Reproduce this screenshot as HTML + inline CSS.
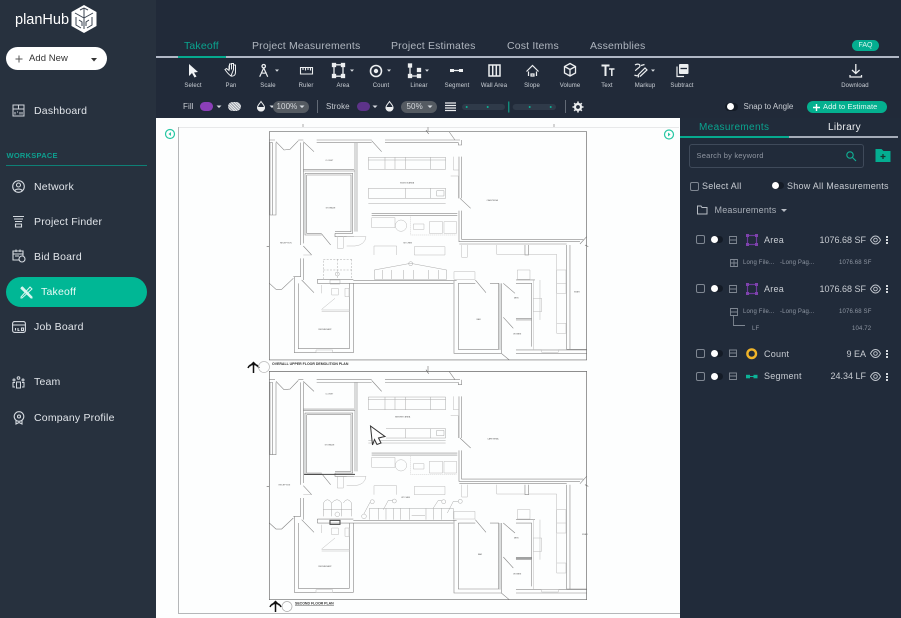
<!DOCTYPE html>
<html lang="en"><head><meta charset="utf-8"><title>planHub Takeoff</title>
<style>
html,body{margin:0;padding:0}
body{width:901px;height:618px;overflow:hidden;background:#27313e;position:relative;font-family:"Liberation Sans",sans-serif;color:#dfe3e8}
.t{position:absolute;white-space:nowrap;line-height:12px;height:12px}
.a{position:absolute}
.nav{font-size:10.5px;left:34px;letter-spacing:.2px;color:#e1e5ea}
.tab{font-size:10.5px;top:39.5px;letter-spacing:.17px;color:#b0b6bf}
.lbl{font-size:6px;top:79.500px;width:50px;text-align:center;color:#ccd1d7;letter-spacing:.1px}
.r2{font-size:8px;top:100.500px;color:#c8ccd2;letter-spacing:.1px}
.m{font-size:9px;color:#c8ccd2;letter-spacing:.25px}
.v{font-size:9px;color:#c8ccd2;text-align:right;right:35px}
.s{font-size:6px;color:#8e96a2;letter-spacing:.15px}
.cb{position:absolute;width:7px;height:7px;border:1px solid #7f8792;border-radius:2px;left:696px}
.tg{position:absolute;width:12px;height:7px;border-radius:4px;background:#141b26;left:711px}
.tg:before{content:"";position:absolute;left:0;top:0;width:7px;height:7px;border-radius:50%;background:#fff}
svg{position:absolute;overflow:visible}
</style></head><body>

<!-- main areas -->
<div class="a" style="left:156px;top:0;width:745px;height:118px;background:#212a39"></div>
<div class="a" style="left:679px;top:118px;width:222px;height:500px;background:#212b3a"></div>
<div class="a" style="left:156px;top:118px;width:523.500px;height:500px;background:#fdfefe"></div>

<!-- logo -->
<div class="t" style="left:15px;top:12.500px;font-size:14.500px;line-height:14px;height:14px;color:#fff">planHub</div>
<svg style="left:70px;top:4px" width="28" height="30" viewBox="0 0 28 30"><path d="M14 1L26.500 8V22L14 29L1.500 22V8Z" fill="#fff"/><path d="M14 4V14M14 14L5 9M14 14L23 9M14 14V25M6 13V21L11 24M22 13V21L17 24M10 6L14 4L18 6M9 16L12 18V22M19 16L16 18V22" fill="none" stroke="#3a4350" stroke-width="1"/></svg>

<!-- add new -->
<div class="a" style="left:6px;top:47px;width:101px;height:23px;border-radius:12px;background:#fff"></div>
<svg style="left:15px;top:55px" width="8" height="8"><path d="M4 .5V7.500M.5 4H7.500" stroke="#555" stroke-width="1"/></svg>
<div class="t" style="left:29px;top:53px;font-size:9.500px;color:#333;letter-spacing:.05px">Add New</div>
<svg style="left:90.500px;top:57.500px" width="6" height="4"><path d="M0 0H6L3 3.500Z" fill="#333"/></svg>

<!-- nav -->
<svg style="left:12px;top:104px" width="13" height="13" viewBox="0 0 13 13" fill="none" stroke="#cfd4da"><path d="M1 1H12V12H1ZM1 5H12M6.500 1V5M3 8V10.500M8 8V10.500M5 8H6M10 8V10.500"/></svg>
<div class="t nav" style="top:105px">Dashboard</div>
<div class="t" style="left:6.500px;top:150px;font-size:7.500px;font-weight:bold;color:#0e9f8f;letter-spacing:.25px">WORKSPACE</div>
<div class="a" style="left:6px;top:165px;width:141px;height:1px;background:#0e8076"></div>

<svg style="left:12px;top:180px" width="13" height="13" viewBox="0 0 13 13" fill="none" stroke="#d5dae0" stroke-width="1.100"><circle cx="6.500" cy="6.500" r="5.800"/><circle cx="6.500" cy="5" r="2"/><path d="M2.800 10.600C4 8.600 9 8.600 10.200 10.600"/></svg>
<div class="t nav" style="top:180.500px">Network</div>
<svg style="left:12px;top:215px" width="13" height="13" viewBox="0 0 13 13" fill="none" stroke="#d5dae0" stroke-width="1.100"><path d="M1 1.500H12M2 4H11M3 6.500H10M3.500 9H9.500V12H3.500Z"/></svg>
<div class="t nav" style="top:215.700px">Project Finder</div>
<svg style="left:12px;top:249px" width="14" height="14" viewBox="0 0 14 14" fill="none" stroke="#d5dae0" stroke-width="1.100"><path d="M7 11H1V2H11V7M1 5H11M4 .5V3M8 .5V3M3 7H7"/><circle cx="10" cy="10" r="3"/></svg>
<div class="t nav" style="top:250.700px">Bid Board</div>

<div class="a" style="left:6px;top:277px;width:141px;height:30px;border-radius:15px;background:#00b795"></div>
<svg style="left:20px;top:286px" width="13" height="13" viewBox="0 0 13 13" fill="none" stroke="#d6f5ee" stroke-width="1"><path d="M1 1L12 12M2.500 1L1 2.500L11 12H12V11ZM10 1L1 11V12H2L12 3Z"/></svg>
<div class="t nav" style="top:285.700px;left:41px;color:#eafbf7">Takeoff</div>

<svg style="left:12px;top:321px" width="14" height="12" viewBox="0 0 14 12" fill="none" stroke="#d5dae0" stroke-width="1.100"><rect x=".6" y=".6" width="12.800" height="10.800" rx="2"/><path d="M1 4H13M3.500 7V9.500M6 7V9.500H7.500M9.500 7H11.500V9.500H9.500Z"/></svg>
<div class="t nav" style="top:321.300px">Job Board</div>
<svg style="left:12px;top:376px" width="13" height="13" viewBox="0 0 13 13" fill="none" stroke="#d5dae0"><circle cx="6.500" cy="2" r="1.300"/><circle cx="2" cy="4" r="1"/><circle cx="11" cy="4" r="1"/><path d="M4.500 6H8.500V12H4.500ZM3 6.500H1V11H3M10 6.500H12V11H10"/></svg>
<div class="t nav" style="top:376.300px">Team</div>
<svg style="left:13px;top:411px" width="12" height="14" viewBox="0 0 12 14" fill="none" stroke="#d5dae0" stroke-width="1.100"><circle cx="6" cy="5.500" r="4.800"/><circle cx="6" cy="5.500" r="1.500"/><path d="M3 9.500V13L6 11.500L9 13V9.500"/></svg>
<div class="t nav" style="top:411.700px">Company Profile</div>

<!-- tabs -->
<div class="t tab" style="left:184px;color:#0aa48f">Takeoff</div>
<div class="t tab" style="left:252px">Project Measurements</div>
<div class="t tab" style="left:391px">Project Estimates</div>
<div class="t tab" style="left:507px">Cost Items</div>
<div class="t tab" style="left:590px">Assemblies</div>
<div class="a" style="left:852px;top:40px;width:27px;height:11px;border-radius:6px;background:#05ad90"></div>
<div class="t" style="left:852px;top:39.500px;width:27px;text-align:center;font-size:7px;color:#d8f5ee">FAQ</div>
<div class="a" style="left:156px;top:55.500px;width:743px;height:2px;background:#b0b7c5"></div>
<div class="a" style="left:178px;top:55.500px;width:48px;height:2px;background:#06a98e"></div>

<!-- tools -->
<svg style="left:156px;top:60px" width="745" height="22" fill="none" stroke="#eceef0" stroke-width="1.300">
<path d="M33 4V16L36 13L38.500 17.500L40.500 16.500L38 12.500L42 12Z" fill="#f2f4f6" stroke="none"/>
<path d="M75 16C72 14 70 11 69 9.500L70.500 8.500L73 10.500V5.500M73.500 9.500V4H75.500V9.500M75.500 9V3.500H77.500V9.500M77.500 9.500V5H79.500V12C79.500 15 78 16.500 75 16Z" stroke-width="1"/>
<path d="M107.700 8L103.700 16.700M107.700 8L111.700 16.700M105 12.500C107 13.500 108.500 13.500 110.500 12.500" stroke-width="1.200"/><circle cx="107.700" cy="6.200" r="1.700"/>
<path d="M144.500 7.500H156.500V14H144.500ZM147 7.500V10M149.500 7.500V10.500M152 7.500V10M154.500 7.500V10.500" stroke-width="1.100"/>
<path d="M178 6V15M187 6V15M180 4.800H185M180 16.200H185"/><rect x="176.500" y="3.500" width="3" height="3" fill="#eceef0"/><rect x="185.500" y="3.500" width="3" height="3" fill="#eceef0"/><rect x="176.500" y="14.500" width="3" height="3" fill="#eceef0"/><rect x="185.500" y="14.500" width="3" height="3" fill="#eceef0"/>
<circle cx="220" cy="11" r="5.500" stroke-width="1.600"/><circle cx="220" cy="11" r="2.200" fill="#eceef0" stroke="none"/>
<path d="M254 6V16H261"/><rect x="252.500" y="4" width="3" height="3" fill="#eceef0"/><rect x="252.500" y="14.500" width="3" height="3" fill="#eceef0"/><rect x="261.500" y="14.500" width="3" height="3" fill="#eceef0"/><rect x="261.500" y="8.500" width="3" height="3" fill="#eceef0"/>
<path d="M296 10.500H304"/><rect x="294" y="9" width="4" height="3" fill="#eceef0" stroke="none"/><rect x="303" y="9" width="4" height="3" fill="#eceef0" stroke="none"/>
<path d="M333 5H344V16H333ZM336.700 5V16M340.300 5V16" stroke-width="1.500"/>
<path d="M370.500 11.500L376.500 5.500L382.500 11.500M372.500 11.500V16M380.500 11.500V16M375 14H378V16H375Z" stroke-width="1.200"/>
<path d="M414 3.500L419.500 6.500V13L414 16L408.500 13V6.500ZM408.500 6.500L414 9.500L419.500 6.500M414 9.500V16"/>
<path d="M445.500 5.500H453.500M449.500 5.500V16" stroke-width="2"/><path d="M453 9H458.500M455.800 9V16" stroke-width="1.500"/>
<path d="M479 5C481 3.500 484 4 484 6C484 8 479.500 9 479.500 11M485 5.500L488.500 4.500M482 15L489 8L491 10L484 16.500M478.500 15C481 17 484 14 482 17.500" stroke-width="1.200"/>
<path d="M521 6.500V16.500H528" stroke-width="1.200"/><rect x="523" y="4" width="9.500" height="10" rx="1" fill="#eceef0" stroke="none"/><path d="M524.500 8.500H531" stroke="#212a39"/>
<path d="M699.800 4V13M696 10L699.800 13.500L703.600 10M694 15V17H705.500V15" stroke-width="1.300"/>
</svg>
<svg style="left:156px;top:60px" width="745" height="22" fill="#d8dce1">
<path d="M119 9.500h4l-2 2.200zM194 9.500h4l-2 2.200zM231 9.500h4l-2 2.200zM269 9.500h4l-2 2.200zM495 9.500h4l-2 2.200z"/>
</svg>
<div class="t lbl" style="left:168px">Select</div>
<div class="t lbl" style="left:206px">Pan</div>
<div class="t lbl" style="left:243px">Scale</div>
<div class="t lbl" style="left:281px">Ruler</div>
<div class="t lbl" style="left:318px">Area</div>
<div class="t lbl" style="left:356px">Count</div>
<div class="t lbl" style="left:394px">Linear</div>
<div class="t lbl" style="left:432px">Segment</div>
<div class="t lbl" style="left:469px">Wall Area</div>
<div class="t lbl" style="left:507px">Slope</div>
<div class="t lbl" style="left:545px">Volume</div>
<div class="t lbl" style="left:582px">Text</div>
<div class="t lbl" style="left:620px">Markup</div>
<div class="t lbl" style="left:657px">Subtract</div>
<div class="t lbl" style="left:830px">Download</div>

<!-- row 2 -->
<div class="t r2" style="left:183px">Fill</div>
<div class="a" style="left:200px;top:102px;width:13px;height:9px;border-radius:5px;background:#8b3fb8"></div>
<div class="a" style="left:228px;top:102px;width:13px;height:9px;border-radius:5px;background:repeating-linear-gradient(45deg,#e6e8eb 0 1px,#9aa0a8 1px 2px)"></div>
<svg style="left:156px;top:98px" width="745" height="18"><path d="M113.500 7.500h5l-2.500 2.500z" fill="#d8dce1"/></svg>
<div class="a" style="left:272.700px;top:100.700px;width:36px;height:12px;border-radius:6px;background:#555b62"></div>
<div class="t r2" style="left:276.500px;color:#d5d8dc">100%</div>
<div class="a" style="left:317px;top:100px;width:1px;height:13px;background:#626a76"></div>
<div class="t r2" style="left:326px">Stroke</div>
<div class="a" style="left:357px;top:102px;width:13px;height:9px;border-radius:5px;background:#5d3389"></div>
<div class="a" style="left:401px;top:100.700px;width:36px;height:12px;border-radius:6px;background:#555b62"></div>
<div class="t r2" style="left:406.500px;color:#d5d8dc">50%</div>
<div class="a" style="left:565px;top:100px;width:1px;height:13px;background:#626a76"></div>
<svg style="left:156px;top:98px" width="745" height="18" fill="none" stroke="#eceef0">
<path d="M60.500 7.500h5l-2.500 2.500zM216.500 7.500h5l-2.500 2.500zM143.500 7.500h5l-2.500 2.500zM271.500 7.500h5l-2.500 2.500z" fill="#d8dce1" stroke="none"/>
<path d="M105 3.500C103 6.500 101.500 7.500 101.500 9.500A3.500 3.500 0 0 0 108.500 9.500C108.500 7.500 107 6.500 105 3.500Z"/><path d="M101.500 9.500H108.500A3.500 3.500 0 0 1 101.500 9.500Z" fill="#eceef0"/>
<path d="M233.500 3.500C231.500 6.500 230 7.500 230 9.500A3.500 3.500 0 0 0 237 9.500C237 7.500 235.500 6.500 233.500 3.500Z"/><path d="M230 9.500H237A3.500 3.500 0 0 1 230 9.500Z" fill="#eceef0"/>
<path d="M289 5H300M289 7.500H300M289 10H300M289 12.500H300" stroke-width="1.200"/>
<rect x="306" y="6" width="43" height="6" rx="3" fill="#2f3a49" stroke="none"/><rect x="356.700" y="6" width="43.300" height="6" rx="3" fill="#2f3a49" stroke="none"/>
<g fill="#0cb397" stroke="none"><circle cx="310.700" cy="9" r="1"/><circle cx="331.700" cy="9" r="1"/><circle cx="373.700" cy="9" r="1"/><circle cx="394.700" cy="9" r="1"/><rect x="352.300" y="3.500" width="1" height="11"/></g>
<circle cx="422" cy="9" r="3" stroke-width="2.200"/><path d="M422 3.500V5M422 13V14.500M416.500 9H418M426 9H427.500M418.200 5.200L419.300 6.300M424.700 11.700L425.800 12.800M418.200 12.800L419.300 11.700M424.700 6.300L425.800 5.200" stroke-width="1.600"/>
</svg>
<div class="a" style="left:725px;top:103px;width:13px;height:8px;border-radius:4px;background:#141b26"></div>
<div class="a" style="left:726.500px;top:103.300px;width:7px;height:7px;border-radius:50%;background:#fff"></div>
<div class="t r2" style="left:743.500px;letter-spacing:0">Snap to Angle</div>
<div class="a" style="left:807px;top:101px;width:80px;height:12px;border-radius:6px;background:#04b08f"></div>
<svg style="left:813px;top:103.500px" width="7" height="7"><path d="M3.500 0V7M0 3.500H7" stroke="#fff" stroke-width="1.400"/></svg>
<div class="t r2" style="left:823px;color:#e4f8f3;font-size:7.500px;top:101px">Add to Estimate</div>

<!-- canvas -->
<svg style="left:0;top:0" width="901" height="618" fill="none">
<defs>
<g id="pl" stroke="#888" stroke-width="1.800">
<path d="M88 60H105M88 68H98M175 60H190M230 60H395M435 60H660M230 68H395M435 68H655V75H665V60"/>
<path d="M108 65L132 90L150 88L175 62M190 65L222 95M395 62L425 95M628 36L645 60"/>
<path d="M90 68V285H108V68M98 68V285M182 68V375M190 68V370"/>
<path d="M190 148H342M190 153H345M345 68V335M351 68V335"/>
<path d="M195 160H338V340H285M200 165H333V335H285M195 160V345H245M200 165V340H245M245 342L272 375M285 340V350H342"/>
<path d="M657 110V235M665 110V235M660 235L692 265M657 272V365H1020M665 272V358H1030M1020 372L1040 350"/>
<path d="M395 280H652M395 286H652"/>
<path d="M232 478H340M232 490H640M340 482H650M232 478V490"/>
<path d="M163 470V698H340V490M175 490V686H328V490M185 480L222 518"/>
<path d="M182 415V470H163M190 415V480M190 378L215 405M88 490L108 508H125L160 475M160 470H182"/>
<path d="M642 482V700H784M655 490V688H776V490H750M706 480L738 518M655 490H706M784 490V700L808 720M790 490L825 520M828 480H885M828 490H875V680M790 592L820 625M828 595H875M828 600H875M828 690H1040M828 700H1040M780 490V690"/>
<path d="M980 375V688H1040M990 375V688M658 372H980M855 375V405H866V375"/>
<g stroke="#bbb" stroke-width="1.500">
<path d="M632 168H655V235M640 110V150H657M395 293H465V323H395ZM568 305H608V340H568ZM612 305H650V340H612ZM520 312H552V328H520Z"/>
<circle cx="483" cy="317" r="17"/>
<path d="M512 290V345H650" stroke-dasharray="3 3"/>
<path d="M292 350V385H310V350M320 350H378Q375 375 345 378H320M402 378H470V405M402 378V405M523 380H615V405H523Z"/>
<path d="M228 690H278V698H228ZM245 495V520M245 570H328M245 574H328M245 568L285 535M275 505H295V525H275ZM315 505H327V530H315ZM190 405H215"/>
<path d="M880 480V688M900 480V600M665 375V412H682V375M770 375V403H855M866 403H950V610M950 450H978V520H950ZM950 490H978M950 610H978V640H950ZM905 690H955V697H905ZM642 455H705V478H642ZM832 450H870V478H832ZM880 535H905V575H880Z"/>
</g>
<path d="M88 35H1040V720H88Z" stroke="#6a6a6a" stroke-width="2"/>
<path d="M558 30L566 42M80 380H88M1035 375L1045 380" stroke="#666"/>
</g>
<filter id="bl" x="-5%" y="-5%" width="110%" height="110%"><feGaussianBlur stdDeviation=".3"/></filter>
</defs>

<!-- page frame -->
<path d="M178 127.500H679" stroke="#e8e9ea"/>
<path d="M178.500 127V613.500H680" stroke="#b5b7b9"/>
<g stroke="#aaa"><path d="M303 124V127M428 127V131M554 124V127M428 366V371"/></g>

<g filter="url(#bl)">
<!-- plan 1 -->
<g transform="translate(240 120) scale(.3333)">
<use href="#pl"/>
<g stroke="#aaa" stroke-width="1.500">
<path d="M385 112H617V148H385ZM435 112V148M465 112V148M497 112V148M572 112V148M385 120H617"/>
<path d="M385 205H617V235H385ZM385 250H617M572 205V235M497 205V235M590 212H612V228H590Z"/>
<path d="M403 450L512 430L620 450V478H403ZM428 450V478M455 450V478M490 450V478M520 450V478M565 450V478M595 450V478"/><circle cx="512" cy="431" r="6"/>
<path d="M250 418H335M250 450H335M250 478V418M292 418V478M335 418V478" stroke-dasharray="6 4"/><circle cx="292" cy="462" r="6"/>
<path d="M270 480H300V492H270Z"/>
</g>
<g fill="#555" font-size="6" font-family="Liberation Sans, sans-serif">
<text x="256" y="123">CLOSET</text><text x="257" y="266">STORAGE</text><text x="480" y="191">STATION AREA</text><text x="740" y="243">CAFETERIA</text><text x="120" y="370">RECEPTION</text><text x="490" y="370">KITCHEN</text><text x="235" y="630">RESTAURANT</text><text x="710" y="600">BAR</text><text x="822" y="536">MEN</text><text x="820" y="643">WOMEN</text><text x="1002" y="518">STAIR</text>
</g>
</g>
<!-- plan 2 -->
<g transform="translate(240 359.700) scale(.3333)">
<use href="#pl"/>
<g stroke="#aaa" stroke-width="1.500">
<path d="M385 112H617V150H385ZM435 112V150M465 112V150M497 112V150M572 112V150M385 120H617"/>
<path d="M438 207H617V235H438M385 250H617M385 242H617M572 207V235M497 207V235M590 212H612V228H590Z"/>
<path d="M388 446H640V480M388 446V480M415 446V480M438 446V480M460 446V480M482 446V480M508 446V480M558 446V480M580 446V480M605 446V480M515 468H555"/>
<path d="M250 470V430Q262 410 275 430V470M275 430Q292 410 305 430V470M310 430Q322 410 335 430V470M250 450H335"/><circle cx="292" cy="464" r="7"/>
<path d="M372 462L390 428M430 450L445 422H458M580 445L595 422H605M622 460L640 425H655"/>
<circle cx="372" cy="470" r="7"/><circle cx="397" cy="426" r="6"/><circle cx="463" cy="424" r="6"/><circle cx="611" cy="426" r="6"/><circle cx="661" cy="425" r="6"/>
</g>
<g stroke="#444" stroke-width="3">
<path d="M270 482H300V494H270Z"/>
<path d="M192 344H345"/>
<path d="M828 595H875"/>
</g>
<g fill="#555" font-size="6" font-family="Liberation Sans, sans-serif">
<text x="256" y="105">CLOSET</text><text x="254" y="257">STORAGE</text><text x="465" y="174">SERVERY AREA</text><text x="742" y="240">CAFETERIA</text><text x="116" y="378">RECEPTION</text><text x="484" y="415">KITCHEN</text><text x="235" y="622">RESTAURANT</text><text x="714" y="586">BAR</text><text x="822" y="536">MEN</text><text x="820" y="645">WOMEN</text><text x="1026" y="526">STAIR</text>
</g>
</g>
</g>

<!-- plan titles -->
<g fill="#333" font-family="Liberation Sans, sans-serif" font-weight="bold">
<text x="272" y="365" font-size="3.500">OVERALL UPPER FLOOR DEMOLITION PLAN</text>
<text x="295" y="604.700" font-size="3.500">SECOND FLOOR PLAN</text>
</g>
<g stroke="#111" stroke-width="1.500"><path d="M253.500 373V363M250 366L253.500 362.500L257 366M248 368A6 6 0 0 1 259 368"/></g>
<circle cx="264" cy="367" r="5.500" stroke="#bbb" stroke-width=".7"/>
<g stroke="#111" stroke-width="1.500"><path d="M275.500 612V602M272 605L275.500 601.500L279 605M270 607A6 6 0 0 1 281 607"/></g>
<circle cx="287" cy="606.500" r="5" stroke="#aaa" stroke-width=".7"/>
<path d="M295 605.700H334" stroke="#555" stroke-width=".5"/>

<!-- cursor -->
<path d="M370.500 426L385 436.500L378.500 438L381 443L377 444.500L374.500 439.500L372.500 445Z" fill="#fff" stroke="#333" stroke-width="1"/>

<!-- nav arrows -->
<circle cx="170" cy="134" r="4.500" stroke="#27c7a3" stroke-width="1.200"/><path d="M171 132L168.500 134L171 136Z" fill="#27c7a3"/>
<circle cx="669" cy="134.500" r="4.500" stroke="#27c7a3" stroke-width="1.200"/><path d="M668 132.500L670.500 134.500L668 136.500Z" fill="#27c7a3"/>
</svg>

<!-- right panel -->
<div class="t" style="left:699px;top:121.500px;font-size:10px;color:#0aa48f;letter-spacing:.35px">Measurements</div>
<div class="t" style="left:828px;top:121.500px;font-size:10px;color:#eef0f2;letter-spacing:.35px">Library</div>
<div class="a" style="left:680px;top:136px;width:109px;height:2px;background:#06a98e"></div>
<div class="a" style="left:789px;top:136px;width:109px;height:2px;background:#a5acb8"></div>
<div class="a" style="left:689px;top:144px;width:173px;height:22px;border:1px solid #3f4a5a;border-radius:3px"></div>
<div class="t" style="left:696.500px;top:150px;font-size:7.500px;color:#8f96a1;letter-spacing:.2px">Search by keyword</div>
<svg style="left:846px;top:151px" width="11" height="10" fill="none" stroke="#10b195" stroke-width="1.100"><circle cx="4" cy="4" r="3.200"/><path d="M6.500 6.500L10 10"/></svg>
<svg style="left:874.500px;top:149px" width="16" height="13"><path d="M.500 0H6.500L8.500 2H15.500V13H.500Z" fill="#04ad91"/><path d="M8 5V10M5.500 7.500H10.500" stroke="#16342f" stroke-width="1.300"/></svg>

<div class="a" style="left:689.500px;top:182px;width:7px;height:7px;border:1px solid #7f8792;border-radius:2px"></div>
<div class="t m" style="left:702px;top:180px">Select All</div>
<div class="a" style="left:771.500px;top:182px;width:12px;height:7px;border-radius:4px;background:#141b26"></div>
<div class="a" style="left:771.500px;top:182px;width:7px;height:7px;border-radius:50%;background:#fff"></div>
<div class="t m" style="left:787px;top:180px">Show All Measurements</div>

<svg style="left:697px;top:205px" width="11" height="10" fill="none" stroke="#b7bcc4"><path d="M.500 1H4L5 2.500H10V9H.500Z"/></svg>
<div class="t m" style="left:714.500px;top:204px;font-size:9px;letter-spacing:.2px;color:#a9afb8">Measurements</div>
<svg style="left:781px;top:209px" width="6" height="3"><path d="M0 0H6L3 3Z" fill="#b7bcc4"/></svg>

<!-- rows -->
<div class="cb" style="top:235px"></div><div class="tg" style="top:236px"></div>
<div class="t m" style="left:764px;top:234px">Area</div><div class="t v" style="top:234px">1076.68 SF</div>
<div class="t s" style="left:743px;top:257px">Long File...</div><div class="t s" style="left:780px;top:257px">-Long Pag...</div><div class="t s" style="left:839px;top:257px">1076.68 SF</div>

<div class="cb" style="top:284px"></div><div class="tg" style="top:285px"></div>
<div class="t m" style="left:764px;top:283px">Area</div><div class="t v" style="top:283px">1076.68 SF</div>
<div class="t s" style="left:743px;top:306px">Long File...</div><div class="t s" style="left:780px;top:306px">-Long Pag...</div><div class="t s" style="left:839px;top:306px">1076.68 SF</div>
<div class="t s" style="left:752px;top:323px">LF</div><div class="t s" style="left:852px;top:323px">104.72</div>

<div class="cb" style="top:349px"></div><div class="tg" style="top:350px"></div>
<div class="t m" style="left:764px;top:347.500px">Count</div><div class="t v" style="top:347.500px">9 EA</div>

<div class="cb" style="top:372px"></div><div class="tg" style="top:373px"></div>
<div class="t m" style="left:764px;top:370.300px">Segment</div><div class="t v" style="top:370.300px">24.34 LF</div>

<svg style="left:680px;top:225px" width="221" height="165" fill="none" stroke="#7f8792" stroke-width=".9">
<!-- minus boxes -->
<path d="M49.500 11.500H56.500V18.500H49.500ZM49.500 15H56.500"/>
<path d="M49.500 60.500H56.500V67.500H49.500ZM49.500 64H56.500"/>
<path d="M49.500 125H56.500V131.500H49.500ZM49.500 128H56.500"/>
<path d="M49.500 148H56.500V154.500H49.500ZM49.500 151H56.500"/>
<!-- sub boxes -->
<path d="M50.500 34.500H57.500V41.500H50.500ZM50.500 38H57.500M54 34.500V41.500"/>
<path d="M50.500 83.500H57.500V90.500H50.500ZM50.500 87H57.500M53.500 90.500V100.500H65"/>
<!-- area icons -->
<g stroke="#6b3a9a" stroke-width="1.200"><path d="M67.500 10.500H76.500V19.500H67.500Z"/><path d="M67.500 59.500H76.500V68.500H67.500Z"/></g>
<g fill="#7f42ad" stroke="none"><rect x="66" y="9" width="3" height="3"/><rect x="75" y="9" width="3" height="3"/><rect x="66" y="18" width="3" height="3"/><rect x="75" y="18" width="3" height="3"/><rect x="66" y="58" width="3" height="3"/><rect x="75" y="58" width="3" height="3"/><rect x="66" y="67" width="3" height="3"/><rect x="75" y="67" width="3" height="3"/></g>
<!-- count -->
<circle cx="71.700" cy="128.700" r="4.300" stroke="#f0b429" stroke-width="2.400"/>
<!-- segment -->
<path d="M66 151.500H77" stroke="#0cb397" stroke-width="1"/><rect x="66" y="149.800" width="4" height="3.500" fill="#0cb397" stroke="none"/><rect x="73.500" y="149.800" width="4" height="3.500" fill="#0cb397" stroke="none"/>
<!-- eyes -->
<g stroke="#c3c8cf" stroke-width=".9">
<path d="M190.500 15C192 12 194 11 195.500 11C197 11 199 12 200.500 15C199 18 197 19 195.500 19C194 19 192 18 190.500 15Z"/><circle cx="195.500" cy="15" r="1.800"/>
<path d="M190.500 64C192 61 194 60 195.500 60C197 60 199 61 200.500 64C199 67 197 68 195.500 68C194 68 192 67 190.500 64Z"/><circle cx="195.500" cy="64" r="1.800"/>
<path d="M190.500 128.500C192 125.500 194 124.500 195.500 124.500C197 124.500 199 125.500 200.500 128.500C199 131.500 197 132.500 195.500 132.500C194 132.500 192 131.500 190.500 128.500Z"/><circle cx="195.500" cy="128.500" r="1.800"/>
<path d="M190.500 151.500C192 148.500 194 147.500 195.500 147.500C197 147.500 199 148.500 200.500 151.500C199 154.500 197 155.500 195.500 155.500C194 155.500 192 154.500 190.500 151.500Z"/><circle cx="195.500" cy="151.500" r="1.800"/>
</g>
<!-- kebabs -->
<g fill="#d5d9de" stroke="none">
<rect x="206" y="11" width="2" height="2"/><rect x="206" y="14" width="2" height="2"/><rect x="206" y="17" width="2" height="2"/>
<rect x="206" y="60" width="2" height="2"/><rect x="206" y="63" width="2" height="2"/><rect x="206" y="66" width="2" height="2"/>
<rect x="206" y="125" width="2" height="2"/><rect x="206" y="128" width="2" height="2"/><rect x="206" y="131" width="2" height="2"/>
<rect x="206" y="148" width="2" height="2"/><rect x="206" y="151" width="2" height="2"/><rect x="206" y="154" width="2" height="2"/>
</g>
</svg>
</body></html>
